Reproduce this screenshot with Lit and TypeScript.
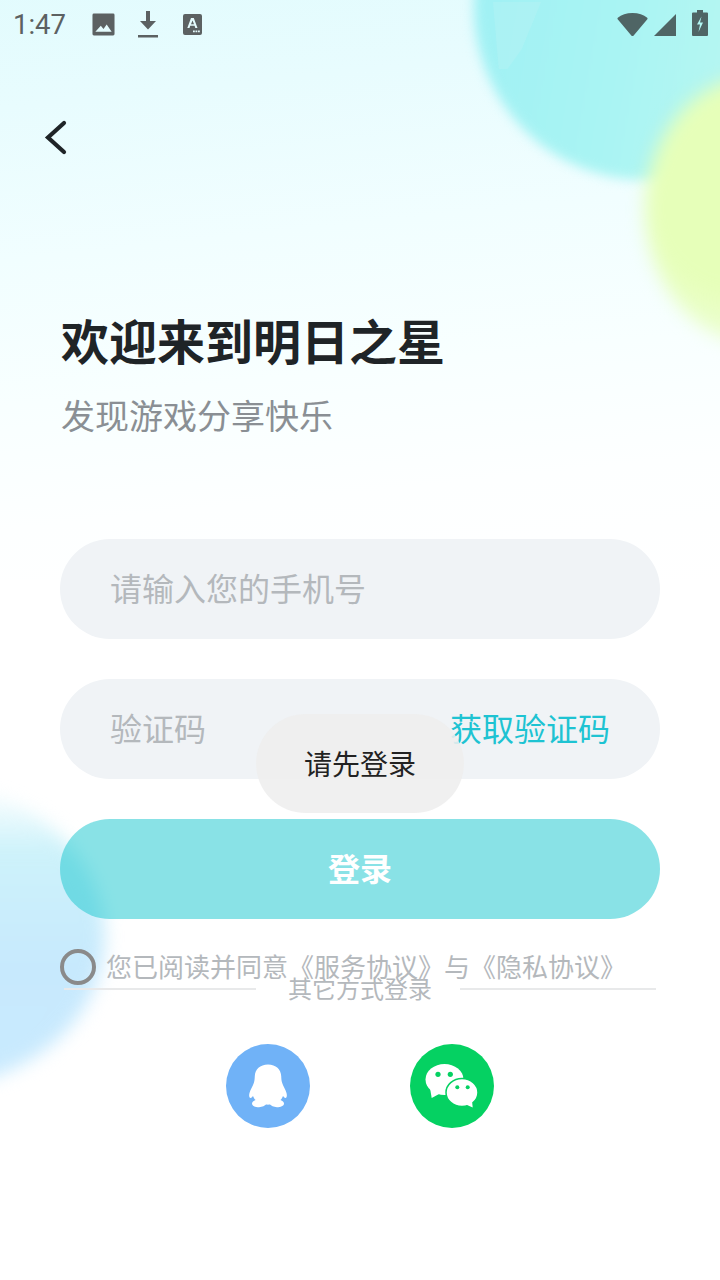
import { LitElement, html, css } from "lit";
import { customElement } from "lit/decorators.js";

@customElement("app-root")
export class AppRoot extends LitElement {
  static styles = css`
    :host { display: block; position: relative; width: 720px; height: 1280px; overflow: hidden; background: #fff; font-family: "Noto Sans CJK SC", "Noto Sans", sans-serif; }
    .bg { position: absolute; inset: 0; overflow: hidden; }
    .wash { position: absolute; left: -60px; right: -60px; top: -60px; height: 640px; background: linear-gradient(174deg, #dffbfd 0%, #e8fcfe 24%, #f1feff 45%, #f8ffff 65%, #fdffff 82%, #ffffff 100%); }
    .blob { position: absolute; border-radius: 50%; }
    .b1 { left: 474px; top: -165px; width: 340px; height: 345px; background: linear-gradient(100deg, #9ef0f4 0%, #a9f4f3 45%, #c0f9f1 100%); filter: blur(6px); }
    .patch { position: absolute; left: 493px; top: 2px; width: 48px; height: 67px; background: rgba(225,250,250,.14); clip-path: polygon(0 0, 100% 0, 60% 70%, 30% 100%, 12% 100%); }
    .b2 { left: 645px; top: 75px; width: 230px; height: 270px; background: radial-gradient(ellipse at 40% 42%, #e6ffb9 0%, #e6ffb9 45%, rgba(233,255,200,.75) 72%, rgba(240,255,225,0) 100%); filter: blur(9px); }
    .b3 { left: -245px; top: 785px; width: 350px; height: 302px; background: linear-gradient(180deg, rgba(205,243,250,0) 0%, #cdf2fa 22%, #c7e9fd 60%, #c9eafe 100%); filter: blur(9px); }
    .content { position: relative; display: flex; flex-direction: column; }
    .status { height: 48px; display: flex; align-items: center; padding: 0 12px 0 13px; color: #5c6162; }
    .time { font: 27.5px/1 Roboto, sans-serif; width: 79px; margin-top: 2px; }
    .status svg { display: block; fill: #5c6162; flex: none; }
    .sicons { display: flex; align-items: center; }
    .dl { margin: 0 25px 0 23px; }
    .right { margin-left: auto; display: flex; align-items: center; }
    .status .right svg { fill: #4f6565; }
    .sig { margin: 2px 0 0 6px; }
    .bat { margin: -2px 0 0 16px; }
    .back { margin: 66px 0 0 44px; height: 46px; }
    .main { padding: 0 60px; display: flex; flex-direction: column; }
    h1 { margin: 144px 0 0 1px; font-size: 48px; line-height: 70px; font-weight: 700; color: #1f2427; }
    .sub { margin: 16px 0 0 1px; font-size: 34px; line-height: 50px; color: #8a8f94; }
    .field { height: 100px; box-sizing: border-box; padding: 0 50px 4px 50px; border-radius: 50px; background: #f0f3f6; display: flex; align-items: center; justify-content: space-between; font-size: 32px; color: #b4b8bc; }
    .phone { margin-top: 99px; }
    .code { margin-top: 40px; }
    .get { color: #1ec3d2; }
    .login { margin-top: 40px; height: 100px; box-sizing: border-box; padding-bottom: 4px; border-radius: 50px; background: rgba(28,200,208,.52); color: #fff; font-size: 32px; font-weight: 700; display: flex; align-items: center; justify-content: center; }
    .agree { margin-top: 30px; height: 36px; display: flex; align-items: center; gap: 10px; font-size: 26px; color: #b4b8bc; white-space: nowrap; }
    .agree span:last-child { padding-bottom: 4px; }
    .radio { width: 36px; height: 36px; box-sizing: border-box; border: 4px solid #8a8a8a; border-radius: 50%; flex: none; }
    .other { margin-top: -15px; height: 30px; display: grid; grid-template-columns: 192px 1fr 196px; padding: 0 4px; align-items: center; font-size: 24px; color: #b4b8bc; text-align: center; }
    .other span { padding: 0 0 4px 4px; }
    .other i { height: 2px; background: #e8e9ea; margin-bottom: 2px; }
    .social { margin-top: 44px; display: flex; justify-content: center; gap: 100px; }
    .circle { width: 84px; height: 84px; border-radius: 50%; display: flex; align-items: center; justify-content: center; }
    .qq { background: #70b2f7; }
    .wx { background: #05d162; }
    .toast { position: absolute; left: 256px; top: 714px; width: 208px; height: 99px; box-sizing: border-box; padding-bottom: 2px; border-radius: 50px; background: rgba(238,238,238,.88); color: #222; font-size: 28px; display: flex; align-items: center; justify-content: center; }
  `;

  render() {
    return html`
      <div class="bg">
        <div class="wash"></div>
        <div class="blob b1"></div>
        <div class="patch"></div>
        <div class="blob b2"></div>
        <div class="blob b3"></div>
      </div>
      <div class="content">
        <div class="status">
          <span class="time">1:47</span>
          <div class="sicons">
            <svg width="23" height="23" viewBox="0 0 24 24"><path fill-rule="evenodd" d="M2 .500h20a1.500 1.500 0 0 1 1.500 1.500v20a1.500 1.500 0 0 1-1.500 1.500H2A1.500 1.500 0 0 1 .5 22V2A1.500 1.500 0 0 1 2 .500zM3.500 19.500h17l-5.200-7.500-3.300 4.600-2.800-3.400z"/></svg>
            <svg class="dl" width="20" height="27" viewBox="0 0 20 27"><path d="M8 0h4v10h6l-8 8.500L2 10h6zM0 24h20v2.500H0z"/></svg>
            <svg width="19" height="21" viewBox="0 0 19 21"><path fill-rule="evenodd" d="M2 0h15a2 2 0 0 1 2 2v17a2 2 0 0 1-2 2H2a2 2 0 0 1-2-2V2a2 2 0 0 1 2-2zM8 4 4.300 14h2.200l.7-2.200h4.400l.7 2.200h2.200L10.800 4zM9.500 6.400l1.500 3.800H8zM10 16.500h1.800v1.800H10zM12.500 16.500h1.800v1.800h-1.800zM15 16.500h1.800v1.800H15z"/></svg>
          </div>
          <div class="right">
            <svg width="31" height="25" viewBox="0 0 32 25"><path d="M16 .500C9.800.500 4.500 2.500.8 5.500c-.5.400-.5 1-.1 1.500L15 24c.5.600 1.500.600 2 0L31.300 7c.4-.5.400-1.100-.1-1.500C27.500 2.500 22.200.500 16 .500z"/></svg>
            <svg class="sig" width="22" height="22" viewBox="0 0 22 22"><path d="M22 0v22H0z"/></svg>
            <svg class="bat" width="16" height="26" viewBox="0 0 16 26"><path fill-rule="evenodd" d="M5 0h6v2.500h4a1 1 0 0 1 1 1V25a1 1 0 0 1-1 1H1a1 1 0 0 1-1-1V3.500a1 1 0 0 1 1-1h4zM9.500 6.500 5 14.500h3L6.500 22 11 12.500H8z"/></svg>
          </div>
        </div>
        <div class="back">
          <svg width="24" height="46" viewBox="0 0 24 46"><path d="M20 9 4 23.500 20 38" fill="none" stroke="#1f2427" stroke-width="4.200" stroke-linecap="round" stroke-linejoin="miter"/></svg>
        </div>
        <div class="main">
          <h1>欢迎来到明日之星</h1>
          <div class="sub">发现游戏分享快乐</div>
          <div class="field phone"><span>请输入您的手机号</span></div>
          <div class="field code"><span>验证码</span><span class="get">获取验证码</span></div>
          <div class="login">登录</div>
          <div class="agree"><span class="radio"></span><span>您已阅读并同意《服务协议》与《隐私协议》</span></div>
          <div class="other"><i></i><span>其它方式登录</span><i></i></div>
          <div class="social">
            <div class="circle qq">
              <svg width="40" height="44" viewBox="0 0 40 44"><path fill="#fff" d="M20 .5C12 .5 7 5.500 6.800 12C6.700 15 6.500 17 5.800 19C5 22 2.500 25 1.500 29C1 31 .8 33.500 2.500 34C3.500 34 4.500 32.500 5 32C5.500 33.500 6.500 35 7.500 36C5.500 37 4 38 4 39.500C4 42 7.500 43.200 11 43.200C14.500 43.200 17 41.500 18 40.600C19.300 40.800 20.700 40.800 22 40.600C23 41.500 25.500 43.200 29 43.200C32.500 43.200 36 42 36 39.500C36 38 34.500 37 32.500 36C33.500 35 34.500 33.500 35 32C35.500 32.500 36.500 34 37.500 34C39.200 33.500 39 31 38.500 29C37.500 25 35 22 34.200 19C33.500 17 33.300 15 33.200 12C33 5.500 28 .5 20 .5z"/></svg>
            </div>
            <div class="circle wx">
              <svg width="56" height="44" viewBox="0 0 56 44">
                <ellipse cx="20.500" cy="15.500" rx="19" ry="15.500" fill="#fff"/>
                <path fill="#fff" d="M6 24 7.700 34 16 29.500z"/>
                <ellipse cx="38" cy="28.500" rx="16" ry="14" fill="#fff" stroke="#05d162" stroke-width="1.500"/>
                <path fill="#fff" d="M42 40.500 48.700 43.500 48 36.500z"/>
                <circle cx="14" cy="10.300" r="2.600" fill="#05d162"/><circle cx="26.300" cy="10.300" r="2.600" fill="#05d162"/>
                <circle cx="33.300" cy="23.300" r="2" fill="#05d162"/><circle cx="43.700" cy="23.300" r="2" fill="#05d162"/>
              </svg>
            </div>
          </div>
        </div>
      </div>
      <div class="toast">请先登录</div>
    `;
  }
}
